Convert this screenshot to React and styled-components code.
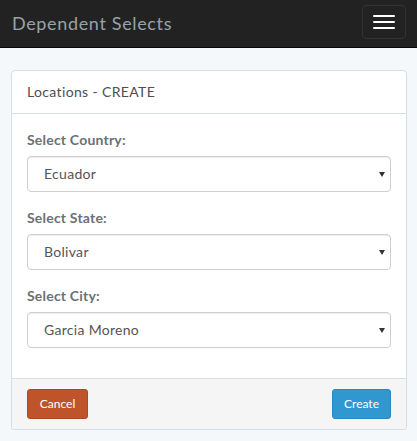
import React from 'react'
import styled, { createGlobalStyle } from 'styled-components'

const GlobalStyle = createGlobalStyle`
    * { box-sizing: border-box; }
    body {
        margin: 0;
        background-color: #f5f8fa;
        font-family: Lato, "Open Sans", sans-serif;
        font-size: 14px;
        line-height: 1.6;
        color: #636b6f;
    }
`

const Navbar = styled.div`
    height: 48px;
    background-color: #222222;
    border-bottom: 1px solid #080808;
    display: flex;
    align-items: flex-start;
    justify-content: space-between;
    padding: 0 11px 0 12px;
`

const Brand = styled.div`
    font-size: 18px;
    line-height: 46px;
    color: #98a2ab;
    letter-spacing: 0.65px;
`

const Toggle = styled.button`
    margin-top: 5px;
    width: 44px;
    height: 34px;
    background: transparent;
    border: 1px solid #333;
    border-radius: 4px;
    display: flex;
    flex-direction: column;
    align-items: center;
    justify-content: center;
    gap: 4px;
    padding: 0;

    span {
        display: block;
        width: 22px;
        height: 2px;
        background: #fff;
        border-radius: 1px;
    }
`

const Container = styled.div`
    padding: 22px 10px 0 11px;
`

const Panel = styled.div`
    background: #fff;
    border: 1px solid #d3e0e9;
    border-radius: 4px;
    box-shadow: 0 1px 1px rgba(0, 0, 0, 0.05);
    overflow: hidden;
`

const PanelHeading = styled.div`
    padding: 10px 15px;
    border-bottom: 1px solid #d3e0e9;
    color: #4a4f52;
    line-height: 22px;
    letter-spacing: 0.35px;
`

const PanelBody = styled.div`
    padding: 15px;
`

const FormGroup = styled.div`
    margin-bottom: 15px;
`

const Label = styled.label`
    display: block;
    font-weight: 700;
    margin-bottom: 5px;
    line-height: 22px;
    color: #6a7175;
    letter-spacing: 0.2px;
`

const SelectWrap = styled.div`
    position: relative;

    &::after {
        content: '';
        position: absolute;
        right: 6px;
        top: 16px;
        border-left: 3.5px solid transparent;
        border-right: 3.5px solid transparent;
        border-top: 5px solid #333;
        pointer-events: none;
    }
`

const Select = styled.select`
    appearance: none;
    width: 100%;
    height: 36px;
    padding: 4px 12px 6px 16px;
    font-family: inherit;
    font-size: 14px;
    letter-spacing: 0.3px;
    color: #555555;
    background: #fff;
    border: 1px solid #ccd0d2;
    border-radius: 4px;
    box-shadow: inset 0 1px 1px rgba(0, 0, 0, 0.075);
`

const PanelFooter = styled.div`
    padding: 10px 15px;
    background: #f5f5f5;
    border-top: 1px solid #d3e0e9;
    display: flex;
    justify-content: space-between;
`

const Button = styled.button`
    height: 30px;
    padding: 5px 10px;
    font-family: inherit;
    font-size: 12px;
    line-height: 18px;
    border-radius: 3px;
    color: #fff;
    border: 1px solid ${p => (p.danger ? '#aa4a24' : '#2a88bd')};
    background: ${p => (p.danger ? '#bf5329' : '#3097d1')};
    min-width: ${p => (p.danger ? '61px' : '59px')};
`

const fields = [
    { label: 'Select Country:', value: 'Ecuador' },
    { label: 'Select State:', value: 'Bolivar' },
    { label: 'Select City:', value: 'Garcia Moreno' },
]

export default function App() {
    return (
        <>
            <GlobalStyle />
            <Navbar>
                <Brand>Dependent Selects</Brand>
                <Toggle>
                    <span />
                    <span />
                    <span />
                </Toggle>
            </Navbar>
            <Container>
                <Panel>
                    <PanelHeading>Locations - CREATE</PanelHeading>
                    <PanelBody>
                        {fields.map(f => (
                            <FormGroup key={f.label}>
                                <Label>{f.label}</Label>
                                <SelectWrap>
                                    <Select defaultValue={f.value}>
                                        <option>{f.value}</option>
                                    </Select>
                                </SelectWrap>
                            </FormGroup>
                        ))}
                    </PanelBody>
                    <PanelFooter>
                        <Button danger>Cancel</Button>
                        <Button>Create</Button>
                    </PanelFooter>
                </Panel>
            </Container>
        </>
    )
}
